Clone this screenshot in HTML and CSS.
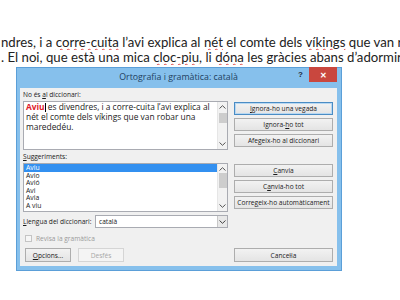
FILE: index.html
```html
<!DOCTYPE html>
<html lang="ca">
<head>
    <meta charset="UTF-8">
    <title>Ortografia i gramàtica</title>
    <link rel="stylesheet" href="styles.css">
</head>
<body>
    <div class="doc">
        <p class="line">ndres, i a <span class="err">corre-cuita</span> l’avi explica al <span class="err">nét</span> el comte dels <span class="err">víkings</span> que van robar una marededéu.</p>
        <p class="line">. El noi, que està una mica <span class="err">cloc-piu</span>, li <span class="err">dóna</span> les gràcies abans d’adormir-se.</p>
    </div>

    <div class="dialog">
        <div class="titlebar">
            <span></span>
            <span class="title">Ortografia i gramàtica: català</span>
            <div class="controls">
                <span class="help">?</span>
                <span class="close">✕</span>
            </div>
        </div>

        <div class="panel">
            <div class="label">No és <u>a</u>l diccionari:</div>
            <div></div>

            <div class="box">
                <div class="box-text"><span class="bad">Aviu</span><span class="caret"></span> es divendres, i a corre-cuita l’avi explica al nét el comte dels víkings que van robar una marededéu.</div>
                <div class="scroll">
                    <svg width="7" height="4" viewBox="0 0 7 4"><path d="M0.5 3.5L3.5 0.7L6.5 3.5" fill="none" stroke="#555"/></svg>
                    <div class="thumb thumb-a"></div>
                    <svg class="down" width="7" height="4" viewBox="0 0 7 4"><path d="M0.5 0.5L3.5 3.3L6.5 0.5" fill="none" stroke="#555"/></svg>
                </div>
            </div>
            <div class="btns">
                <button class="btn default"><u>I</u>gnora-ho una vegada</button>
                <button class="btn">Ignora-<u>h</u>o tot</button>
                <button class="btn">Afegeix-ho al diccionari</button>
            </div>

            <div class="label"><u>S</u>uggeriments:</div>
            <div></div>

            <div class="box">
                <ul class="list">
                    <li class="sel">Aviu</li>
                    <li>Avio</li>
                    <li>Avió</li>
                    <li>Avi</li>
                    <li>Avia</li>
                    <li>A viu</li>
                </ul>
                <div class="scroll">
                    <svg width="7" height="4" viewBox="0 0 7 4"><path d="M0.5 3.5L3.5 0.7L6.5 3.5" fill="none" stroke="#555"/></svg>
                    <div class="thumb thumb-b"></div>
                    <svg class="down" width="7" height="4" viewBox="0 0 7 4"><path d="M0.5 0.5L3.5 3.3L6.5 0.5" fill="none" stroke="#555"/></svg>
                </div>
            </div>
            <div class="btns">
                <button class="btn"><u>C</u>anvia</button>
                <button class="btn">C<u>a</u>nvia-ho tot</button>
                <button class="btn">Corre<u>g</u>eix-ho automàticament</button>
            </div>

            <div class="lang">
                <span><u>L</u>lengua del diccionari:</span>
                <div class="select">
                    <span class="select-value">català</span>
                    <span class="select-arrow">
                        <svg width="7" height="4" viewBox="0 0 7 4"><path d="M0.5 0.5L3.5 3.3L6.5 0.5" fill="none" stroke="#444"/></svg>
                    </span>
                </div>
            </div>
            <div></div>

            <div class="check">
                <span class="checkbox"></span>
                <span>Revisa la gramàtica</span>
            </div>
            <div></div>

            <div class="bottom">
                <button class="btn small"><u>O</u>pcions...</button>
                <button class="btn small disabled">Desfés</button>
            </div>
            <div class="bottom-right">
                <button class="btn">Cancel·la</button>
            </div>
        </div>
    </div>
</body>
</html>
```

FILE: styles.css
```css
* {
    margin: 0;
    padding: 0;
    box-sizing: border-box;
}

body {
    background: #fff;
    font-family: Lato, 'Open Sans', sans-serif;
    width: 400px;
    height: 300px;
    overflow: hidden;
}

/* text del document darrere del diàleg */
.doc {
    padding-top: 35px;
}

.line {
    font-size: 13.2px;
    line-height: 15px;
    color: #222;
    white-space: nowrap;
    overflow: hidden;
    padding-left: 1px;
}

.err {
    text-decoration: underline wavy #e04848;
    text-decoration-thickness: 1px;
    text-underline-offset: 1px;
}

/* finestra */
.dialog {
    width: 326px;
    margin: 2px 0 0 16px;
    background: #86c0ec;
    border: 1px solid #5b9fd8;
    padding: 0 4px 4px 3px;
    font-family: 'Open Sans', 'Noto Sans', sans-serif;
    font-size: 6.6px;
    color: #1a1a1a;
}

.titlebar {
    height: 20px;
    display: grid;
    grid-template-columns: 1fr auto 1fr;
    align-items: start;
}

.title {
    font-size: 8.8px;
    line-height: 18px;
    color: #22405f;
}

.controls {
    justify-self: end;
    display: flex;
    align-items: start;
    gap: 6px;
    margin-top: -1px;
}

.help {
    font-family: 'Liberation Sans', sans-serif;
    font-weight: bold;
    font-size: 8px;
    line-height: 16px;
    color: #1a2a3a;
}

.close {
    width: 28px;
    height: 15px;
    background: #c9473e;
    color: #fff;
    font-size: 8px;
    line-height: 15px;
    text-align: center;
    font-weight: bold;
}

.panel {
    background: #f0f0f0;
    display: grid;
    grid-template-columns: 205px 99px;
    grid-template-rows: 13px 49px 13px 49px 16px 20px 14px;
    column-gap: 6px;
    padding: 0 4px 4px 3px;
}

.label {
    line-height: 13px;
    align-self: end;
}

.box {
    background: #fff;
    border: 1px solid #a9abb2;
    display: flex;
    overflow: hidden;
}

.box-text {
    flex: 1;
    padding: 0 2px;
    font-size: 8.4px;
    line-height: 10px;
    color: #222;
}

.bad {
    color: #e0202a;
    font-weight: bold;
}

.caret {
    display: inline-block;
    width: 1px;
    height: 9px;
    background: #000;
    vertical-align: -2px;
}

.scroll {
    width: 10px;
    background: #f2f2f2;
    border-left: 1px solid #e6e6e6;
    display: flex;
    flex-direction: column;
    align-items: center;
    padding: 3px 0 3px;
}

.thumb {
    width: 8px;
    background: #cdcdcd;
}

.thumb-a {
    height: 10px;
    margin-top: 4px;
}

.thumb-b {
    height: 15px;
    margin-top: 2px;
}

.down {
    margin-top: auto;
}

.list {
    flex: 1;
    list-style: none;
    font-size: 6.8px;
    line-height: 7.6px;
}

.list li {
    padding-left: 2px;
}

.list .sel {
    background: #3390f0;
    color: #fff;
}

.btns {
    display: flex;
    flex-direction: column;
    gap: 3px;
    padding-top: 1px;
}

.btn {
    height: 13px;
    border: 1px solid #adadad;
    background: linear-gradient(#f2f2f2, #e4e4e4);
    font-family: inherit;
    font-size: 6.6px;
    color: #1a1a1a;
    line-height: 11px;
    text-align: center;
}

.btn.default {
    border-color: #4a8cc4;
    box-shadow: inset 0 0 0 1px #b8d8f2;
}

.btn.small {
    width: 46px;
    height: 14px;
}

.btn.disabled {
    background: #f4f4f4;
    border-color: #d5d5d5;
    color: #a8a8a8;
}

.lang {
    display: flex;
    align-items: end;
    justify-content: space-between;
    line-height: 13px;
}

.select {
    width: 133px;
    height: 13px;
    background: #fff;
    border: 1px solid #a9abb2;
    display: flex;
    align-items: center;
}

.select-value {
    flex: 1;
    padding-left: 3px;
}

.select-arrow {
    width: 10px;
    height: 11px;
    background: #e8e8e8;
    border-left: 1px solid #c8c8c8;
    display: flex;
    align-items: center;
    justify-content: center;
}

.check {
    display: flex;
    align-items: center;
    gap: 4px;
    color: #9a9a9a;
    padding-left: 2px;
}

.checkbox {
    width: 7px;
    height: 7px;
    border: 1px solid #c4c4c4;
    background: #f6f6f6;
}

.bottom {
    display: flex;
    gap: 7px;
    padding-left: 2px;
}

.bottom-right {
    display: flex;
    flex-direction: column;
}

.bottom-right .btn {
    height: 14px;
}
```
